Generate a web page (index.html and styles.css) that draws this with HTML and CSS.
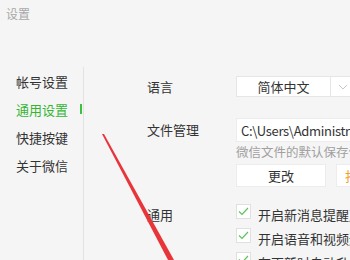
FILE: index.html
```html
<!DOCTYPE html>
<html lang="zh-CN">
<head>
<meta charset="UTF-8">
<title>设置</title>
<link rel="stylesheet" href="styles.css">
</head>
<body>

<div class="window">
    <div class="title">设置</div>
    <div class="main">
        <ul class="nav">
            <li>帐号设置</li>
            <li class="active">通用设置<span class="mark"></span></li>
            <li>快捷按键</li>
            <li>关于微信</li>
        </ul>
        <div class="panel">
            <div class="section">
                <div class="label">语言</div>
                <div class="field">
                    <div class="select">
                        <span class="select-text">简体中文</span>
                        <span class="select-arrow">
                            <svg width="10" height="6" viewBox="0 0 10 6"><path d="M1 1 L5 5 L9 1" fill="none" stroke="#c8c8c8" stroke-width="1"/></svg>
                        </span>
                    </div>
                </div>
            </div>
            <div class="section section-file">
                <div class="label">文件管理</div>
                <div class="field">
                    <div class="path">C:\Users\Administrator\Documents\WeChat Files</div>
                    <div class="hint">微信文件的默认保存位置</div>
                    <div class="buttons">
                        <button type="button">更改</button>
                        <button type="button" class="open">打开文件夹</button>
                    </div>
                </div>
            </div>
            <div class="section section-general">
                <div class="label">通用</div>
                <div class="field">
                    <div class="check"><span class="box"><svg width="11" height="9" viewBox="0 0 11 9"><path d="M1 4.5 L4 7.5 L10 1" fill="none" stroke="#5cc35c" stroke-width="1.2"/></svg></span>开启新消息提醒声音</div>
                    <div class="check"><span class="box"><svg width="11" height="9" viewBox="0 0 11 9"><path d="M1 4.5 L4 7.5 L10 1" fill="none" stroke="#5cc35c" stroke-width="1.2"/></svg></span>开启语音和视频通话提醒声音</div>
                    <div class="check"><span class="box"><svg width="11" height="9" viewBox="0 0 11 9"><path d="M1 4.5 L4 7.5 L10 1" fill="none" stroke="#5cc35c" stroke-width="1.2"/></svg></span>有更新时自动升级微信</div>
                </div>
            </div>
        </div>
    </div>

    <!-- red annotation stroke drawn over the window -->
    <svg class="annotation" width="350" height="260" viewBox="0 0 350 260">
        <polygon points="102,134 104,134 174,260 168,260" fill="#e8353a"/>
    </svg>
</div>

</body>
</html>
```

FILE: styles.css
```css
html, body {
    margin: 0;
    padding: 0;
}

body {
    font-family: "Noto Sans CJK SC", "Noto Sans", sans-serif;
    font-size: 13px;
    color: #333;
    background-color: #f5f5f5;
    overflow: hidden;
}

.window {
    position: relative;
    width: 350px;
    height: 260px;
    overflow: hidden;
}

.title {
    padding: 5px 6px 0;
    height: 62px;
    font-size: 12px;
    line-height: 18px;
    color: #a8a8a8;
}

.main {
    display: flex;
}

.nav {
    list-style: none;
    margin: 0;
    padding: 0;
    width: 84px;
    height: 200px;
    flex-shrink: 0;
    border-right: 1px solid #e2e2e2;
    box-sizing: border-box;
}

.nav li {
    display: flex;
    align-items: center;
    justify-content: space-between;
    height: 28px;
    padding-left: 16px;
    white-space: nowrap;
}

.nav li.active {
    color: #35b535;
}

.mark {
    width: 2px;
    height: 10px;
    margin-right: 1px;
    background-color: #3ec13e;
}

.panel {
    padding: 9px 0 0 63px;
    flex-shrink: 0;
    width: 300px;
}

.section {
    display: flex;
}

.label {
    width: 89px;
    flex-shrink: 0;
    line-height: 22px;
}

.field {
    flex: 1;
    min-width: 0;
}

.select {
    display: flex;
    width: 140px;
    height: 21px;
    background-color: #fff;
    border: 1px solid #e6e6e6;
    box-sizing: border-box;
}

.select-text {
    width: 93px;
    text-align: center;
    line-height: 19px;
    border-right: 1px solid #e6e6e6;
}

.select-arrow {
    display: flex;
    align-items: center;
    padding-left: 7px;
}

.section-file {
    margin-top: 20px;
}

.section-file .label {
    line-height: 24px;
}

.path {
    width: 180px;
    height: 24px;
    padding-left: 4px;
    line-height: 24px;
    font-size: 13px;
    letter-spacing: -0.3px;
    white-space: nowrap;
    overflow: hidden;
    background-color: #fff;
    border: 1px solid #ececec;
    box-sizing: border-box;
}

.hint {
    margin-top: 2px;
    line-height: 16px;
    font-size: 12.5px;
    color: #a0a0a0;
    white-space: nowrap;
}

.buttons {
    display: flex;
    gap: 10px;
    margin-top: 4px;
}

.buttons button {
    width: 90px;
    height: 23px;
    flex-shrink: 0;
    padding: 0;
    font-family: inherit;
    font-size: 13px;
    color: #333;
    background-color: #fff;
    border: 1px solid #ececec;
}

.buttons button.open {
    text-align: left;
    padding-left: 8px;
    color: #f0a030;
}

.section-general {
    margin-top: 16px;
}

.section-general .label {
    line-height: 24px;
}

.check {
    display: flex;
    align-items: flex-start;
    height: 24px;
    line-height: 24px;
    white-space: nowrap;
}

.box {
    display: flex;
    align-items: center;
    justify-content: center;
    width: 15px;
    height: 15px;
    margin: 1px 7px 0 0;
    flex-shrink: 0;
    background-color: #fff;
    border: 1px solid #e0e0e0;
    box-sizing: border-box;
}

.annotation {
    position: absolute;
    left: 0;
    top: 0;
    pointer-events: none;
}
```
